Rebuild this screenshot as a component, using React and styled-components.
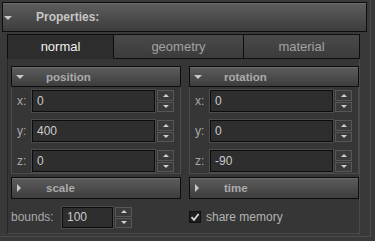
import React from "react";
import styled, { createGlobalStyle } from "styled-components";

const Global = createGlobalStyle`
  html, body { margin: 0; padding: 0; background: #393939; }
  body { font-family: "Liberation Sans", Arial, sans-serif; }
  * { box-sizing: border-box; }
`;

const Root = styled.div`
  width: 371px;
  height: 237px;
  border-right: 1px solid #4b4b4b;
  border-bottom: 1px solid #4b4b4b;
  padding: 2px 3px 0 2px;
  display: flex;
  flex-direction: column;
`;

const Bar = styled.div`
  display: flex;
  align-items: center;
  height: ${(p) => p.$h}px;
  border: 1px solid #0d0d0d;
  background: linear-gradient(#5d5d5d, #3d3d3d);
  box-shadow: inset 0 1px 0 #6a6a6a;
  padding-left: ${(p) => (p.$main ? 1 : 4)}px;
  color: ${(p) => (p.$main ? "#c6c6c6" : "#ababab")};
  font-weight: bold;
  font-size: ${(p) => (p.$main ? 12 : 11.5)}px;
`;

const Arrow = styled.span`
  display: inline-block;
  width: 0;
  height: 0;
  ${(p) =>
    p.$open
      ? `border-left: 4px solid transparent; border-right: 4px solid transparent; border-top: 4px solid #c8c8c8; margin: 1px ${p.$main ? 24 : 22}px 0 0;`
      : `border-top: 4px solid transparent; border-bottom: 4px solid transparent; border-left: 4px solid #c8c8c8; margin: 0 25px 0 1px;`}
`;

const TabWidget = styled.div`
  margin: 2px 7px 2px 5px;
  flex: 1;
  display: flex;
  flex-direction: column;
`;

const TabRow = styled.div`
  display: grid;
  grid-template-columns: 107px 130px 1fr;
  height: 25px;
`;

const Tab = styled.div`
  display: flex;
  align-items: center;
  justify-content: center;
  font-size: 13px;
  border: 1px solid #0d0d0d;
  border-left-width: ${(p) => (p.$first ? 1 : 0)}px;
  border-bottom-color: ${(p) => (p.$active ? "transparent" : "#0d0d0d")};
  background: ${(p) => (p.$active ? "#2d2d2d" : "linear-gradient(#4a4a4a, #3b3b3b)")};
  color: ${(p) => (p.$active ? "#f0f0f0" : "#a2a2a2")};
`;

const Panel = styled.div`
  flex: 1;
  border: 1px solid #4a4a4a;
  border-top: none;
  border-left-color: #262626;
  background: #363636;
  padding: 7px 4px 0 3px;
  display: grid;
  grid-template-columns: 170px 170px;
  column-gap: 8px;
  align-content: start;
`;

const Column = styled.div`
  display: flex;
  flex-direction: column;
`;

const Box = styled.div`
  border: 1px solid #4c4c4c;
  border-top: none;
  padding: 3px 0 0 0;
  height: 87px;
  display: flex;
  flex-direction: column;
  gap: 8px;
`;

const Row = styled.div`
  display: flex;
  align-items: center;
  height: 22px;
  padding-left: ${(p) => p.$pl ?? 5}px;
`;

const Label = styled.span`
  width: ${(p) => p.$w}px;
  font-size: 12px;
  color: #a9a9a9;
`;

const Input = styled.div`
  width: ${(p) => p.$w}px;
  height: ${(p) => p.$h || 22}px;
  border: 1px solid #0c0c0c;
  outline: 1px solid #4c4c4c;
  background: #2e2e2e;
  color: #cbcbcb;
  font-size: 12px;
  display: flex;
  align-items: center;
  padding-left: 4px;
`;

const Spin = styled.div`
  margin-left: 2px;
  width: 17px;
  height: ${(p) => p.$h || 22}px;
  display: flex;
  flex-direction: column;
  gap: 1px;
`;

const SpinBtn = styled.div`
  flex: 1;
  border: 1px solid #575757;
  background: #3b3b3b;
  display: flex;
  align-items: center;
  justify-content: center;
  &::after {
    content: "";
    width: 0;
    height: 0;
    border-left: 3px solid transparent;
    border-right: 3px solid transparent;
    ${(p) => (p.$up ? "border-bottom: 3px solid #d0d0d0;" : "border-top: 3px solid #d0d0d0;")}
  }
`;

const Gap = styled.div`
  height: ${(p) => p.$h}px;
`;

const Check = styled.span`
  width: 12px;
  height: 12px;
  background: #1e1e1e;
  border: 1px solid #111;
  display: inline-flex;
  align-items: center;
  justify-content: center;
  margin: 0 5px 0 0;
`;

const CheckText = styled.span`
  font-size: 12px;
  color: #b4b4b4;
`;

const Spinner = ({ h }) => (
  <Spin $h={h}>
    <SpinBtn $up />
    <SpinBtn />
  </Spin>
);

const Field = ({ label, value, w }) => (
  <Row>
    <Label $w={15}>{label}</Label>
    <Input $w={w}>{value}</Input>
    <Spinner />
  </Row>
);

const Section = ({ title, rows }) => (
  <>
    <Bar $h={21}>
      <Arrow $open />
      {title}
    </Bar>
    <Box>
      {rows.map(([l, v]) => (
        <Field key={l} label={l} value={v} w={123} />
      ))}
    </Box>
    <Gap $h={3} />
  </>
);

export default function App() {
  return (
    <>
      <Global />
      <Root>
        <Bar $h={30} $main>
          <Arrow $open $main />
          Properties:
        </Bar>
        <TabWidget>
          <TabRow>
            <Tab $active $first>normal</Tab>
            <Tab>geometry</Tab>
            <Tab>material</Tab>
          </TabRow>
          <Panel>
            <Column>
              <Section title="position" rows={[["x:", "0"], ["y:", "400"], ["z:", "0"]]} />
              <Bar $h={22}>
                <Arrow />
                scale
              </Bar>
              <Gap $h={7} />
              <Row $pl={0}>
                <Label $w={51}>bounds:</Label>
                <Input $w={51} $h={21}>100</Input>
                <Spinner h={21} />
              </Row>
            </Column>
            <Column>
              <Section title="rotation" rows={[["x:", "0"], ["y:", "0"], ["z:", "-90"]]} />
              <Bar $h={22}>
                <Arrow />
                time
              </Bar>
              <Gap $h={7} />
              <Row $pl={0}>
                <Check>
                  <svg width="10" height="10" viewBox="0 0 10 10">
                    <path d="M1.5 5.2 L4 7.8 L8.6 2" fill="none" stroke="#d8d8d8" strokeWidth="1.8" />
                  </svg>
                </Check>
                <CheckText>share memory</CheckText>
              </Row>
            </Column>
          </Panel>
        </TabWidget>
      </Root>
    </>
  );
}
